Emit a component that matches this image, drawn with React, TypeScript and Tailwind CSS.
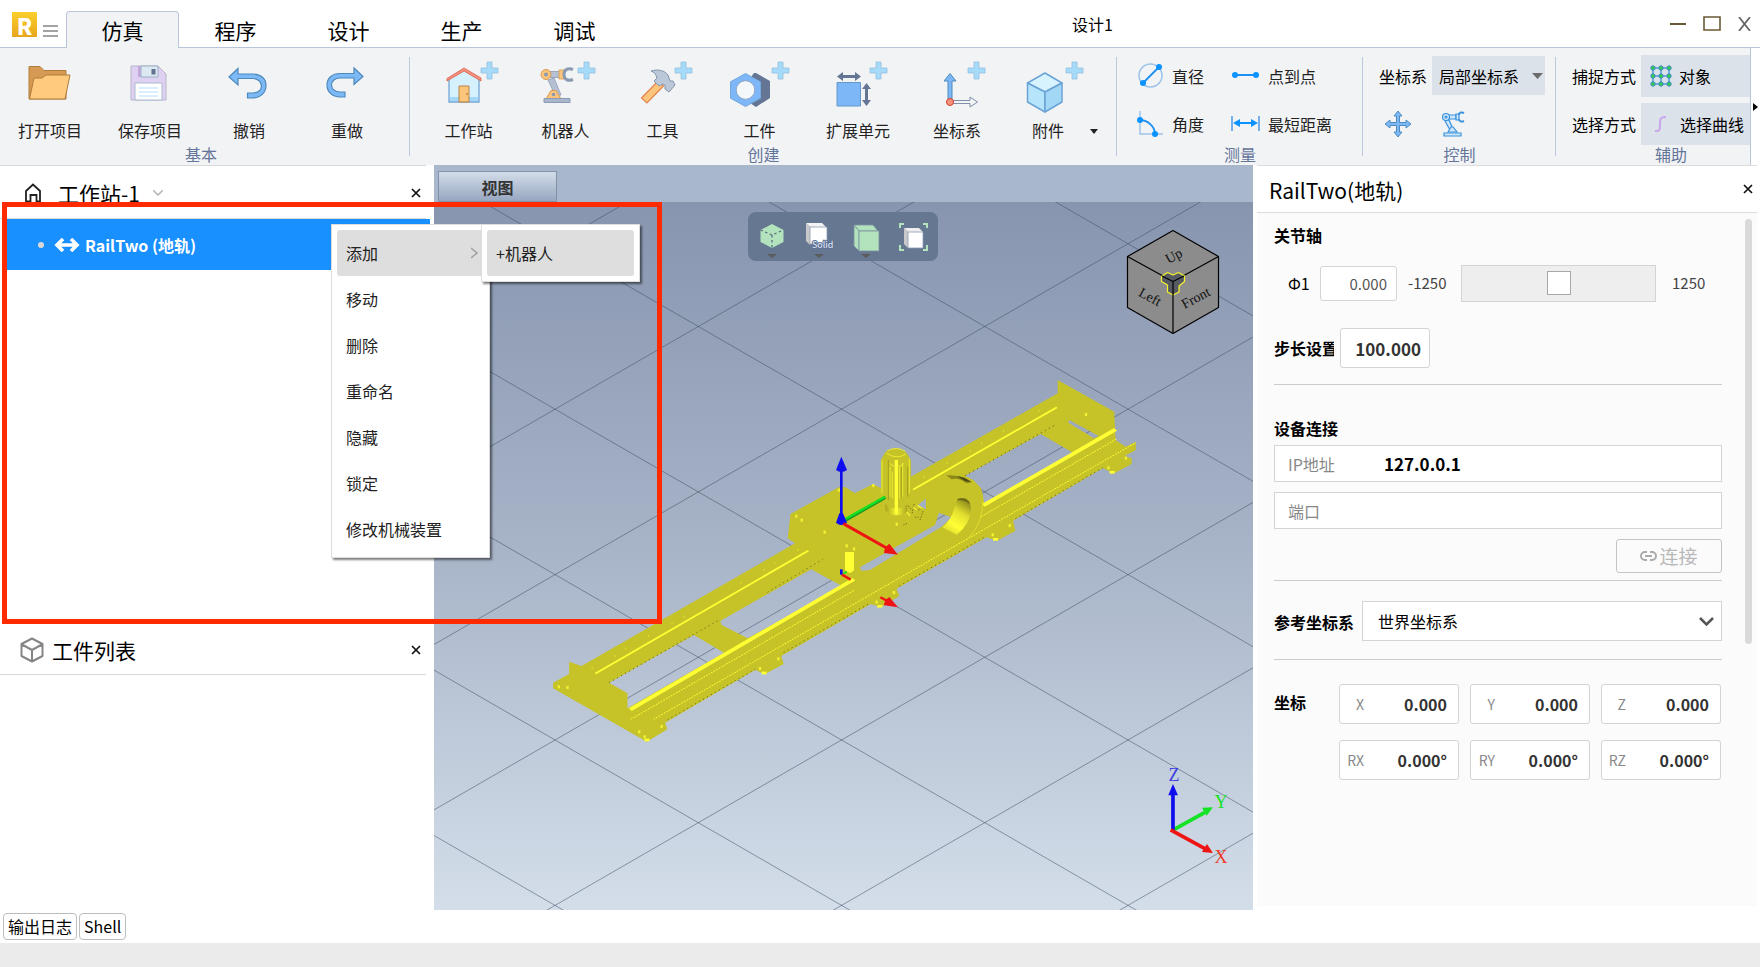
import * as React from "react";
import clsx from "clsx";

const tabs = ["仿真", "程序", "设计", "生产", "调试"];

const menuItems = ["添加", "移动", "删除", "重命名", "隐藏", "锁定", "修改机械装置"];

export default function App() {
  return (
    <div className="flex min-h-screen flex-col overflow-hidden bg-white font-['Noto_Sans_CJK_SC',sans-serif] text-[16px] leading-6 text-black">
      <TitleBar />
      <Ribbon />
      <main className="relative flex flex-1">
        <LeftPanel />
        <Viewport />
        <PropertyPanel />
        <div className="pointer-events-none absolute left-[2px] top-[37px] z-30 h-[422px] w-[660px] border-[5px] border-[#ff2a00]" />
      </main>
      <div className="flex h-[33px] gap-[2px] px-[3px] pt-[3px]">
        <button className="h-[27px] rounded-[4px] border border-[#bdbdbd] px-1 leading-[25px]">输出日志</button>
        <button className="h-[27px] rounded-[4px] border border-[#bdbdbd] px-1 leading-[25px]">Shell</button>
      </div>
      <footer className="h-6 bg-[#ebebeb]" />
    </div>
  );
}

function TitleBar() {
  return (
    <header className="flex h-[48px] items-end border-b border-[#b9c5d9]">
      <div className="flex w-[66px] gap-[6px] self-start pl-3 pt-3">
        <span className="flex h-[25px] w-[25px] items-center justify-center bg-linear-to-b from-[#fad02c] to-[#e8a51c] text-[22px] font-black leading-6 text-white">
          R
        </span>
        <button aria-label="菜单" className="pt-3">
          <svg width="15" height="14" viewBox="0 0 15 14" stroke="#858585" strokeWidth="1.5">
            <path d="M0 2h15M0 7h15M0 12h15" />
          </svg>
        </button>
      </div>
      <nav className="-mb-px flex">
        {tabs.map((tab, i) => (
          <button
            key={tab}
            className={clsx(
              "h-[37px] w-[113px] rounded-t-[4px] border border-b-0 pb-px text-[21px] leading-8",
              i === 0 ? "border-[#b9c5d9] bg-[#f1f3f5]" : "border-transparent",
            )}
          >
            {tab}
          </button>
        ))}
      </nav>
      <h1 className="flex-1 self-center pr-7 text-center text-[16px]">设计1</h1>
      <div className="flex w-[178px] items-center justify-end gap-[17px] self-start pr-[9px] pt-4 text-[#6b5836]">
        <button aria-label="最小化">
          <svg width="16" height="14" viewBox="0 0 16 14" stroke="currentColor" strokeWidth="2">
            <path d="M0 7h16" />
          </svg>
        </button>
        <button aria-label="最大化">
          <svg width="18" height="15" viewBox="0 0 18 15" fill="none" stroke="currentColor" strokeWidth="1.6">
            <path d="M1 1h16v13H1z" />
          </svg>
        </button>
        <button aria-label="关闭">
          <svg width="13" height="14" viewBox="0 0 13 14" stroke="#666" strokeWidth="1.8">
            <path d="M1 0l11 14M12 0L1 14" />
          </svg>
        </button>
      </div>
    </header>
  );
}

/* ---------- ribbon ---------- */

function Ribbon() {
  return (
    <div className="flex h-[117px] overflow-hidden bg-[#f2f3f5]">
      <Group title="基本" className="w-[410px] shrink-0" titleClass="mr-2">
        <Tool label="打开项目" className="w-[100px]"><FolderIcon /></Tool>
        <Tool label="保存项目" className="w-[100px]"><SaveIcon /></Tool>
        <Tool label="撤销" className="w-[98px]"><UndoIcon /></Tool>
        <Tool label="重做" className="w-[98px]"><RedoIcon /></Tool>
      </Group>
      <Group title="创建" className="w-[707px] shrink-0 pl-[10px]" titleClass="-ml-[10px]">
        <Tool label="工作站" className="w-[97px]"><HouseIcon /></Tool>
        <Tool label="机器人" className="w-[97px]"><RobotIcon /></Tool>
        <Tool label="工具" className="w-[97px]"><HammerIcon /></Tool>
        <Tool label="工件" className="w-[97px]"><NutIcon /></Tool>
        <Tool label="扩展单元" className="w-[100px]"><ExtendIcon /></Tool>
        <Tool label="坐标系" className="w-[98px]"><FrameIcon /></Tool>
        <Tool label="附件" className="w-[84px]"><BoxIcon /></Tool>
        <button aria-label="更多附件" className="flex items-start pt-[81px]">
          <svg width="8" height="5" viewBox="0 0 8 5"><path d="M0 0h8L4 5z" fill="#222" /></svg>
        </button>
      </Group>
      <Group title="测量" className="w-[246px] shrink-0">
        <div className="grid grid-cols-[94px_auto] content-start gap-y-[17px] pl-[20px] pt-3">
          <SmallTool label="直径">
            <svg width="27" height="27" viewBox="0 0 27 27" fill="none">
              <circle cx="13.500" cy="13.500" r="11.500" stroke="#9dc3ea" strokeWidth="1.5" />
              <path d="M6 21L21 6" stroke="#1c90f5" strokeWidth="1.8" />
              <circle cx="6" cy="21" r="3" fill="#0a93ff" />
              <circle cx="22" cy="5" r="3" fill="#0a93ff" />
            </svg>
          </SmallTool>
          <SmallTool label="点到点">
            <svg width="29" height="27" viewBox="0 0 29 27">
              <path d="M3 13h23" stroke="#1c90f5" strokeWidth="2" />
              <circle cx="4" cy="13" r="3" fill="#0a93ff" />
              <circle cx="25" cy="13" r="3" fill="#0a93ff" />
            </svg>
          </SmallTool>
          <SmallTool label="角度">
            <svg width="27" height="27" viewBox="0 0 27 27" fill="none">
              <path d="M3 1v23h23" stroke="#9dc3ea" strokeWidth="1.500" />
              <path d="M3 10c8 0 15 7 15 14" stroke="#1c90f5" strokeWidth="1.800" />
              <circle cx="3" cy="10" r="3" fill="#0a93ff" />
              <circle cx="18" cy="24" r="3" fill="#0a93ff" />
            </svg>
          </SmallTool>
          <SmallTool label="最短距离">
            <svg width="29" height="27" viewBox="0 0 29 27">
              <path d="M1 6v15M28 6v15" stroke="#69a9e8" strokeWidth="1.8" />
              <path d="M5 13h19" stroke="#0a93ff" strokeWidth="2" />
              <path d="M2 13l7-4v8zM27 13l-7-4v8z" fill="#0a93ff" />
            </svg>
          </SmallTool>
        </div>
      </Group>
      <Group title="控制" className="w-[193px] shrink-0">
        <div className="pl-[16px] pt-2">
          <div className="flex items-center gap-[5px]">
            <label htmlFor="frame">坐标系</label>
            <span className="relative flex">
              <select id="frame" className="h-[39px] w-[113px] appearance-none bg-[#dce2ea] pl-[7px] outline-none">
                <option>局部坐标系</option>
              </select>
              <svg className="pointer-events-none absolute right-[2px] top-[17px]" width="11" height="6" viewBox="0 0 11 6">
                <path d="M0 0h11L5.500 6z" fill="#6c6c6c" />
              </svg>
            </span>
          </div>
          <div className="flex gap-7 pl-[5px] pt-[15px]">
            <button aria-label="移动">
              <svg width="28" height="28" viewBox="0 0 28 28" fill="#7db8f5" stroke="#4e8cc0" strokeWidth="1">
                <path d="M14 1l4 5h-2.500v6.500H22V10l5 4-5 4v-2.500h-6.500V22H18l-4 5-4-5h2.500v-6.500H6V18l-5-4 5-4v2.500h6.500V6H10z" />
              </svg>
            </button>
            <button aria-label="机器人">
              <svg width="26" height="28" viewBox="0 0 26 28" fill="#cfe6fb" stroke="#3b93dd" strokeWidth="1.2">
                <path d="M7 5h9v4H7zM5 11l4-1 4 9-3 1z" />
                <circle cx="6" cy="7" r="3.500" />
                <circle cx="6" cy="7" r="1" />
                <path d="M16 4h3v6h-3z" />
                <path d="M19 5c0-3 3-3 5-2M19 9c0 3 3 3 5 2" fill="none" strokeWidth="2" />
                <path d="M8 22l3-5h2l4 5z" />
                <path d="M4 23h17v3H4z" />
              </svg>
            </button>
          </div>
        </div>
      </Group>
      <div className="flex flex-1 overflow-hidden border-r border-[#b9c5d9]">
        <Group title="辅助" last className="w-[230px] shrink-0">
          <div className="flex flex-col gap-[6px] pl-4 pt-[7px]">
            <div className="flex items-center gap-[5px]">
              <span id="snap">捕捉方式</span>
              <button aria-labelledby="snap" className="flex h-[42px] w-[140px] items-center gap-[7px] bg-[#dce2ea] pl-[9px]">
                <svg width="22" height="22" viewBox="0 0 22 22">
                  <path d="M3 3h16v16H3zM11 3v16M3 11h16" fill="none" stroke="#4c9be0" strokeWidth="1.500" />
                  {[3, 11, 19].map((y) =>
                    [3, 11, 19].map((x) => (
                      <circle key={`${x}-${y}`} cx={x} cy={y} r="2.2" fill="#2ecf4b" stroke="#4788c8" />
                    )),
                  )}
                </svg>
                对象
              </button>
            </div>
            <div className="flex items-center gap-[5px]">
              <span id="pick">选择方式</span>
              <button aria-labelledby="pick" className="flex h-[42px] w-[140px] items-center gap-2 bg-[#dce2ea] pl-[9px]">
                <svg width="22" height="22" viewBox="0 0 22 22" fill="none" stroke="#c9a5ea" strokeWidth="2">
                  <path d="M5 18h2c3 0 3-2 3-7s0-7 6-7" />
                </svg>
                选择曲线
              </button>
            </div>
          </div>
        </Group>
      </div>
      <div className="flex w-[9px] items-center justify-center bg-white">
        <svg width="5" height="8" viewBox="0 0 5 8"><path d="M0 0v8l5-4z" /></svg>
      </div>
    </div>
  );
}

function Group({
  title,
  last,
  className,
  titleClass,
  children,
}: {
  title: string;
  last?: boolean;
  className?: string;
  titleClass?: string;
  children: React.ReactNode;
}) {
  return (
    <section className={clsx("relative flex flex-col", className)}>
      <div className="flex h-[96px]">{children}</div>
      <h2 className={clsx("text-center leading-5 text-[#64759a]", titleClass)}>{title}</h2>
      {!last && <span className="absolute right-0 top-[9px] h-[99px] w-px bg-[#bccade]" />}
    </section>
  );
}

function Tool({ label, className, children }: { label: string; className: string; children: React.ReactNode }) {
  return (
    <button className={clsx("flex shrink-0 flex-col items-center pt-3 text-[#222]", className)}>
      <svg className="overflow-visible" width="60" height="48" viewBox="0 0 60 48">
        {children}
      </svg>
      <span className="mt-[10px]">{label}</span>
    </button>
  );
}

function SmallTool({ label, children }: { label: string; children: React.ReactNode }) {
  return (
    <button className="flex h-[31px] items-center gap-2 whitespace-nowrap text-[#222]">
      {children}
      {label}
    </button>
  );
}

function Plus({ x = 42 }: { x?: number }) {
  return (
    <path
      transform={`translate(${x} 2)`}
      d="M6 0h5v6h6v5h-6v6H6v-6H0V6h6z"
      fill="#a5daf8"
      stroke="#94bfdf"
      strokeWidth="0.800"
    />
  );
}

function FolderIcon() {
  return (
    <g stroke="#b07c3c" strokeWidth="1">
      <path d="M9 39V6.500h11l4 4h22V39z" fill="#d69a55" />
      <path d="M9.500 39L14 18h8l4-3h24l-5 24z" fill="#ffca7e" />
    </g>
  );
}

function SaveIcon() {
  return (
    <g>
      <path d="M11 6h27l8 8v26H11z" fill="#dfd1f2" stroke="#b7b4c8" />
      <path d="M18 6h3v11h-3z" fill="#c6a9dc" />
      <path d="M21 6h17v11H21z" fill="#dce8f2" stroke="#9fb0c6" />
      <path d="M31.500 9h4v5.500h-4z" fill="#657390" />
      <path d="M15 23h27v17H15z" fill="#fff" stroke="#aab9d0" />
      <path d="M19 28h19M19 32h19M19 36h19" stroke="#cdeafd" strokeWidth="1.500" />
    </g>
  );
}

function UndoIcon() {
  return (
    <path
      d="M10 17l9-8.500v5.500h15c8 0 13 5 13 11.500S42 38 34 38h-5.500v-5H34c5 0 8.500-3 8.500-7S39 18.500 34 18.500H19V25z"
      fill="#7cb9f6"
      stroke="#4d8abb"
      strokeWidth="1.200"
    />
  );
}

function RedoIcon() {
  return (
    <path
      d="M46 16.500l-9-8.500v5.500H23c-8 0-13 5-13 11.500S15 37 23 37h5v-5h-5c-5 0-8.500-3-8.500-7s3.500-7 8.500-7h14v6.500z"
      fill="#7cb9f6"
      stroke="#4d8abb"
      strokeWidth="1.200"
    />
  );
}

function HouseIcon() {
  return (
    <g>
      <path d="M10 19L25 10l15 9v23H10z" fill="#d5f1fe" stroke="#74a5d8" strokeWidth="1.300" />
      <path d="M11 37h28v4H11z" fill="#a3d7f6" />
      <path d="M20 26h10v16H20z" fill="#fdc57b" stroke="#b98344" />
      <circle cx="28" cy="34" r="1" fill="#b98344" />
      <path d="M8 18.500V21l17-10 17 10v-3L25 8z" fill="#f4937c" stroke="#d95d4c" strokeWidth="0.800" />
      <Plus />
    </g>
  );
}

function RobotIcon() {
  return (
    <g>
      <path d="M14 11.500h14v6H14zM12 20l6-2 7 17h-6z" fill="#b5c1d3" stroke="#8b9ab2" strokeWidth="0.800" />
      <path d="M23 10h5v9h-5z" fill="#fdc57b" stroke="#d59a4d" strokeWidth="0.800" />
      <path d="M28 14.500c0-5 4-7 9-5M28 14.500c0 5 4 7 9 5" fill="none" stroke="#8c9ab0" strokeWidth="3" />
      <circle cx="10" cy="14.500" r="5" fill="#fdc57b" stroke="#d59a4d" />
      <circle cx="10" cy="14.500" r="2" fill="#8b9ab2" />
      <path d="M10 39l5-8.500h5l5 8.500z" fill="#fdc57b" stroke="#d59a4d" />
      <circle cx="17.500" cy="34.500" r="1.800" fill="#8b9ab2" />
      <path d="M8 38.500h26v4H8z" fill="#a9b7cc" stroke="#8b9ab2" />
      <Plus x={42} />
    </g>
  );
}

function HammerIcon() {
  return (
    <g>
      <path d="M8.500 38L25 21l5.500 5L14 43z" fill="#fdc57b" stroke="#e2834f" strokeWidth="1.200" />
      <path
        d="M18 11c7-2 13-1 17 4l2 6h3l2 4-6 7-4-3v-4l-2-1-4 2-5-5 3-3c-1-4-3-6-6-7z"
        fill="#bac8da"
        stroke="#8496ac"
      />
      <Plus />
    </g>
  );
}

function NutIcon() {
  return (
    <g>
      <path d="M24 13h2l14 8v17l-14 9-6-4 10-8V23l-9-6z" fill="#657594" />
      <path d="M15.500 13.500l15 8.300v16.400l-15 8.300-15-8.300V21.800z" fill="#7db7f8" stroke="#74a9de" />
      <circle cx="15.500" cy="30" r="9.300" fill="#f5f8fa" stroke="#8ea8c6" />
      <Plus x={42} />
    </g>
  );
}

function ExtendIcon() {
  return (
    <g>
      <path d="M9 22.500h23.500V46H9z" fill="#7db7f8" stroke="#6498cb" />
      <path d="M14 16.500h14M38.500 28v14" stroke="#657594" strokeWidth="3" />
      <path d="M9 16.500l6-4.500v9zM33 16.500L27 12v9zM38.500 23l-4.500 6h9zM38.500 46L34 40h9z" fill="#657594" />
      <Plus x={42} />
    </g>
  );
}

function FrameIcon() {
  return (
    <g>
      <path d="M21 42V21h-4l6-7.500 6 7.500h-4v21z" fill="#7db7f8" stroke="#4d8abb" />
      <path d="M26 40.500h17V37l7.500 5-7.500 5v-3.500H26z" fill="#f2f3f5" stroke="#7f8fa8" />
      <circle cx="23" cy="42" r="3.500" fill="#f4937c" stroke="#d93f33" />
      <Plus x={41} />
    </g>
  );
}

function BoxIcon() {
  return (
    <g stroke="#6ba3d6" strokeWidth="1.500" strokeLinejoin="round">
      <path d="M9.500 23L27 13l17 10-17 9z" fill="#d7f3fe" />
      <path d="M9.500 23L27 32v20L9.500 42z" fill="#b5e4fb" />
      <path d="M44 23L27 32v20l17-10z" fill="#a2d8f6" />
      <Plus x={48} />
    </g>
  );
}

/* ---------- left panels ---------- */

function CloseButton({ label }: { label: string }) {
  return (
    <button aria-label={label} className="p-1">
      <svg width="10" height="10" viewBox="0 0 10 10" stroke="#111" strokeWidth="1.7">
        <path d="M1 1l8 8M9 1L1 9" />
      </svg>
    </button>
  );
}

function LeftPanel() {
  return (
    <aside className="flex w-[434px] shrink-0 flex-col">
      <section className="relative flex-[455]">
        <div className="mr-2 flex h-[54px] items-center border-b border-t border-[#d9d9d9] pl-6 pr-px pt-[2px]">
          <svg width="18" height="20" viewBox="0 0 18 20" fill="none" stroke="#222" strokeWidth="1.800">
            <path d="M2 18.500V8l7-6.500L16 8v10.500h-3.500V12h-6v6.500z" />
          </svg>
          <h2 className="pl-4 text-[21px] leading-8">工作站-1</h2>
          <button aria-label="切换工作站" className="ml-[13px] flex-1">
            <svg width="10" height="6" viewBox="0 0 10 6" fill="none" stroke="#b0b0b0" strokeWidth="1.400">
              <path d="M0 0l5 5 5-5" />
            </svg>
          </button>
          <CloseButton label="关闭工作站" />
        </div>
        <div className="ml-[6px] mr-1 flex h-[51px] items-center bg-[#1890ff] pl-8 font-bold text-white">
          <span className="h-[6px] w-[6px] rounded-full bg-[#d9d9d9]" />
          <svg className="ml-[10px] mr-[5px]" width="26" height="14" viewBox="0 0 26 14" fill="none" stroke="#fff" strokeWidth="3.600">
            <path d="M3 7h20M9 1L3 7l6 6M17 1l6 6-6 6" />
          </svg>
          RailTwo (地轨)
        </div>
        <ContextMenu />
      </section>
      <section className="flex-[290]">
        <div className="mr-2 flex h-[55px] items-center border-b border-[#d9d9d9] pl-5 pr-px pt-[6px]">
          <svg width="24" height="26" viewBox="0 0 24 26" fill="none" stroke="#858585" strokeWidth="2" strokeLinejoin="round">
            <path d="M12 1.500L22.500 7v12L12 24.500 1.500 19V7zM2 7.500l10 5.500 10-5.500M12 13v11" />
          </svg>
          <h2 className="flex-1 pl-2 text-[21px] leading-8">工件列表</h2>
          <CloseButton label="关闭工件列表" />
        </div>
      </section>
    </aside>
  );
}

function ContextMenu() {
  return (
    <div className="absolute left-[331px] top-[59px] z-20 flex items-start text-[#222]">
      <ul className="w-[159px] border border-[#ddd] bg-white p-[5px] shadow-[2px_2px_2px_rgba(0,0,0,0.5)]">
        {menuItems.map((item, i) => (
          <li key={item}>
            <button
              className={clsx(
                "flex h-[46px] w-full items-center justify-between rounded-[3px] pl-[9px] pr-[6px] text-left",
                i === 0 && "bg-[#dedede]",
              )}
            >
              {item}
              {i === 0 && (
                <svg width="7" height="12" viewBox="0 0 7 12" fill="none" stroke="#a0a0a0" strokeWidth="1.500">
                  <path d="M0 1l6 5-6 5" />
                </svg>
              )}
            </button>
          </li>
        ))}
      </ul>
      <ul className="-ml-[9px] w-[159px] border border-[#ddd] bg-white p-[5px] shadow-[2px_2px_2px_rgba(0,0,0,0.5)]">
        <li>
          <button className="h-[46px] w-full rounded-[3px] bg-[#dedede] pl-[9px] text-left">+机器人</button>
        </li>
      </ul>
    </div>
  );
}

/* ---------- 3D view ---------- */

function Viewport() {
  return (
    <section className="flex min-w-0 flex-1 flex-col">
      <div className="flex h-[37px] items-end bg-[#a9b7cc] pl-[4px]">
        <button className="h-[31px] w-[119px] border border-[#8292ac] bg-linear-to-b from-[#d3dde9] to-[#97a7c0] font-bold leading-7 text-[#333]">
          视图
        </button>
      </div>
      <div className="relative flex-1 overflow-hidden bg-linear-to-b from-[#8795af] via-[#a8b4c8] to-[#d4deea]">
        <Scene />
        <div className="absolute left-[314px] top-[10px] flex h-[49px] w-[190px] gap-[17px] rounded-[8px] bg-[#667791] px-[10px] pt-[6px]">
          <button aria-label="线框">
            <svg width="30" height="36" viewBox="0 0 30 36">
              <path d="M14 2l11.500 6v12L14 26 2.500 20V8z" fill="#b2e3bd" />
              <path d="M2.500 8L14 13l11.500-5M14 13v13" fill="none" stroke="#5b6a80" strokeWidth="1.300" strokeDasharray="2.500 2.500" />
              <path d="M9 32h10l-5 4z" fill="#5c5c5c" />
            </svg>
          </button>
          <button aria-label="实体">
            <svg className="overflow-visible" width="30" height="36" viewBox="0 0 30 36">
              <path d="M1 1h16l4 4H5z" fill="#f3f3f3" />
              <path d="M1 1l4 4v18l-4-4z" fill="#c9c9c9" />
              <path d="M5 5h17v17H5z" fill="#fff" stroke="#8a99b3" strokeWidth="0.800" />
              <text x="7" y="26" fontSize="9" fill="#e4ebf5" stroke="#5d7196" strokeWidth="2" paintOrder="stroke">
                Solid
              </text>
              <path d="M9 32h10l-5 4z" fill="#5c5c5c" />
            </svg>
          </button>
          <button aria-label="面">
            <svg width="30" height="36" viewBox="0 0 30 36" stroke="#7b90a0" strokeWidth="0.800">
              <path d="M2 3h19l5 6H7z" fill="#b2e3bd" />
              <path d="M2 3l5 6v20l-5-5z" fill="#b2e3bd" />
              <path d="M7 9h20v20H7z" fill="#b2e3bd" />
              <path d="M9 32h10l-5 4z" fill="#5c5c5c" stroke="none" />
            </svg>
          </button>
          <button aria-label="适应窗口">
            <svg width="30" height="36" viewBox="0 0 30 36">
              <path d="M1 6V2h4M24 2h4v4M28 23v5h-4M5 28H1v-5" fill="none" stroke="#b2e3bd" strokeWidth="2" />
              <path d="M5 6h15l4 4H9z" fill="#eee" />
              <path d="M5 6l4 4v16l-4-4z" fill="#c9c9c9" />
              <path d="M9 10h15v16H9z" fill="#fff" stroke="#8a99b3" strokeWidth="0.800" />
            </svg>
          </button>
        </div>
      </div>
    </section>
  );
}

// floor lines run at ±30°, repeating every 165.4 units down the screen
const floor = Array.from({ length: 11 }, (_, i) => -496 + i * 165.4);

const RAIL =
  "M268 968L303 942V905L330 918L795 550L779 535L785 462L890 382H905L925 400L965 372L982 385V300L992 275L1015 264L1038 278L1047 300V350L1367 100V60L1490 155L1493 240L1515 260L1537 245V270L1513 288L1528 295V312L1490 340L1465 325L1270 482L1275 512L1235 542L1212 532L1016 686L1022 708L982 742L960 732L765 888L770 912L730 942L708 930L512 1088L517 1108L472 1145L268 985Z" +
  "M390 968L575 825L640 878L430 1045V1000Z" +
  "M632 783L830 628L897 678L692 835L635 795Z" +
  "M1165 347L1330 222L1400 278L1207 430L1200 385L1183 360Z" +
  "M1392 180L1456 228L1446 235L1390 188Z" +
  "M936 622L1100 495L1108 458L1136 472L1114 500L958 630L940 632Z" +
  "M1062 435L1080 416V448Z";

const bolts = [
  [280, 980], [299, 982], [455, 1115], [467, 1130], [504, 1099], [718, 925], [758, 896], [972, 726], [1010, 697],
  [1225, 524], [1262, 496], [1477, 323], [1515, 294], [797, 468], [809, 480], [859, 516], [907, 557], [923, 566],
  [890, 390], [965, 376], [1428, 163], [1016, 492],
];

const pins = [
  [352, 925], [402, 888], [425, 866], [475, 828], [526, 790], [552, 770], [676, 668], [726, 630], [750, 610],
  [800, 570], [1075, 350], [1125, 308], [1175, 272], [1200, 250], [1248, 212], [1325, 152],
];

function Scene() {
  return (
    <svg
      className="absolute inset-0 h-full w-full"
      viewBox="434 202 819 708"
      preserveAspectRatio="xMidYMid slice"
      role="img"
      aria-label="RailTwo 三维视图"
    >
      <defs>
        <linearGradient id="bore" x1="0.200" y1="1" x2="0.700" y2="0">
          <stop offset="0" stopColor="#d8d530" />
          <stop offset="0.300" stopColor="#ffff33" />
          <stop offset="0.650" stopColor="#e2df30" />
          <stop offset="1" stopColor="#8d8a1a" />
        </linearGradient>
        <linearGradient id="barrel">
          <stop offset="0" stopColor="#aaa722" />
          <stop offset="0.500" stopColor="#f4f334" />
          <stop offset="1" stopColor="#aaa722" />
        </linearGradient>
      </defs>

      <g stroke="#3c4a5e" strokeOpacity="0.500" strokeWidth="1">
        {floor.map((d) => (
          <React.Fragment key={d}>
            <path d={`M434 ${339.1 + d}L1253 ${811.9 + d}`} />
            <path d={`M434 ${478.9 + d}L1253 ${6 + d}`} />
          </React.Fragment>
        ))}
      </g>

      <g transform="translate(430 360) scale(0.4592 0.3333)">
        <path d={RAIL} fill="#c6c328" fillRule="evenodd" />
        <g fill="none" stroke="#ffff33">
          <path d="M360 941L824 572M1052 389L1365 142" strokeWidth="5" />
          <path d="M436 1049L923 658M1205 436L1493 208" strokeWidth="10" />
          <path d="M437 1078L925 690M487 1078L1175 533L1537 248M1200 470L1495 237" strokeWidth="2.500" strokeDasharray="4 3" />
        </g>
        <path
          d="M517 1080L708 928M770 878L960 728M1022 678L1212 528M1275 476L1465 323M390 968L632 778M735 697L855 598M1165 347L1365 192"
          stroke="#55521a"
          strokeWidth="2"
          strokeDasharray="3 8"
        />
        {pins.map(([x, y]) => (
          <path key={`${x}-${y}`} d={`M${x} ${y - 3}h2v6h-2z`} fill="#e6e431" />
        ))}
        {bolts.map(([x, y]) => (
          <path key={`${x}-${y}`} d={`M${x - 2} ${y - 4}h5v9h-5z`} fill="#f2f133" />
        ))}
        {[[472, 1141], [727, 940], [979, 740], [1231, 539], [1485, 338]].map(([x, y]) => (
          <path key={x} d={`M${x - 5} ${y - 5}h11v8h-11z`} fill="#ffff33" />
        ))}
      </g>

      {/* carriage, motor and the cable ring */}
      <g transform="translate(780 430) scale(0.3333)">
        <path d="M485 150Q520 125 560 148Q612 165 610 215Q608 270 570 322L487 292Q510 278 515 262L478 243V180z" fill="#c6c328" />
        <path d="M498 136Q540 132 576 157L560 160Q535 142 515 148z" fill="#8d8a1a" />
        <path d="M530 138Q555 140 574 156L556 154z" fill="#4d4b14" />
        <path d="M532 207Q572 195 573 238Q570 285 530 314L487 292Q515 270 524 230z" fill="url(#bore)" />
        <path d="M532 207Q560 198 571 222Q550 208 534 211z" fill="#6f6c18" />
        <path d="M608 212Q610 275 568 322" fill="none" stroke="#ecea33" strokeWidth="2" />
        <path d="M304 95L318 66L350 55L380 70L392 95V205L378 250L350 262L316 235L304 205z" fill="#c6c328" />
        <path d="M316 222Q348 250 382 222V246Q350 268 316 242z" fill="url(#barrel)" />
        <path d="M344 90h10v160h-10z" fill="#ffff33" />
        <path
          d="M306 92V190M330 110V200M337 125V205M359 110V205M368 100V200M388 85V190M320 70Q350 90 378 72M328 100Q350 120 372 100M322 62Q350 48 376 64"
          fill="none"
          stroke="#ebe933"
          strokeWidth="3"
        />
        <path d="M325 90V210M364 112V202M383 110V200" stroke="#8f8c1b" strokeWidth="2" />
        <path d="M385 228l12 14M402 222l-6 30M415 240l14-6M405 262h10M420 270l10-28M370 285l14-6" stroke="#706d18" strokeWidth="3" strokeDasharray="4 4" />
        <path d="M400 232l10 8M412 226l16 10M380 246l10 12" stroke="#f3f133" strokeWidth="4" />
        <path d="M195 366h27v55l-12 9-15-10z" fill="#ffff33" />

        <path d="M197 270L316 202" stroke="#169a22" strokeWidth="10" />
        <path d="M196 267L315 200" stroke="#14e324" strokeWidth="7" />
        <path d="M184 270V120" stroke="#0d0df0" strokeWidth="8" />
        <path d="M184 80L201 120Q184 132 168 120z" fill="#0d0df0" />
        <path d="M178 250h11L201 278Q184 292 168 278z" fill="#0d0df0" />
        <path d="M190 281L325 357" stroke="#ee1414" strokeWidth="9" />
        <path d="M354 374L328 341Q312 352 312 369z" fill="#ee1414" />
        <path d="M184 418v16" stroke="#0d0df0" strokeWidth="8" />
        <path d="M190 430l10-4" stroke="#14e324" strokeWidth="6" />
        <path d="M186 434L212 449" stroke="#ee1414" strokeWidth="8" />
        <path d="M301 502L320 512" stroke="#ee1414" strokeWidth="7" />
        <path d="M354 532L328 501Q312 511 312 526z" fill="#ee1414" />

        <path d="M1180 1200L1275 1147" stroke="#14e324" strokeWidth="11" />
        <path d="M1299 1132L1266 1133L1280 1157z" fill="#14e324" />
        <path d="M1179 1206V1095" stroke="#0d0df0" strokeWidth="11" />
        <path d="M1179 1062L1194 1096H1165z" fill="#0d0df0" />
        <path d="M1172 1200L1275 1256" stroke="#ee1414" strokeWidth="11" />
        <path d="M1299 1269L1281 1242L1266 1266z" fill="#ee1414" />
      </g>
      <g className="font-['Liberation_Serif',serif]" fontSize="18" textAnchor="middle">
        <text x="1174" y="781" fill="#3a3de0">Z</text>
        <text x="1221" y="808" fill="#14e324">Y</text>
        <text x="1221" y="863" fill="#ee3a28">X</text>
      </g>

      {/* orientation cube */}
      <g stroke="#000" strokeWidth="1.200" strokeLinejoin="round">
        <path d="M1173 230.500L1218.500 256.500V307.500L1173 333.500L1127.500 307.500V256.500z" fill="#8c8c8c" />
        <path d="M1127.500 256.500L1173 281.500L1218.500 256.500" fill="none" />
        <path
          d="M1161.500 276.500L1167.500 272.500L1173 275L1178.500 272.500L1184.500 276V281.500L1179 286V292L1173 295L1167.500 292V285L1161.500 281.500z"
          fill="#565b63"
          stroke="#f5f52c"
        />
        <path d="M1162 276L1173 281.500L1184 276M1173 281.500V333" fill="none" />
      </g>
      <g className="font-['Liberation_Serif',serif]" fontSize="14" fill="#111" textAnchor="middle">
        <text transform="translate(1176 260) rotate(-28)">Up</text>
        <text transform="translate(1148 301) rotate(28)">Left</text>
        <text transform="translate(1198 302) rotate(-28)">Front</text>
      </g>
    </svg>
  );
}

/* ---------- property panel ---------- */

const boxCls = "rounded-[3px] border border-[#d4d4d4] bg-white outline-none";

function PropertyPanel() {
  return (
    <aside className="ml-[4px] mr-[3px] flex w-[500px] shrink-0 flex-col">
      <div className="flex h-[48px] items-center justify-between border-b border-t border-[#dcdcdc] pl-3">
        <h2 className="pt-[2px] text-[21px] leading-8">RailTwo(地轨)</h2>
        <CloseButton label="关闭属性" />
      </div>
      <div className="flex flex-1 justify-between bg-[#fbfbfb] pl-[17px] pr-[5px]">
        <div className="w-[448px]">
          <h3 className="pt-[10px] font-bold">关节轴</h3>
          <div className="mt-[17px] flex h-[38px] items-center pl-[14px] text-[15px] text-[#444]">
            <label htmlFor="phi" className="w-8 text-[16px] text-black">Φ1</label>
            <input id="phi" defaultValue="0.000" className={clsx(boxCls, "h-[35px] w-[77px] pr-[9px] text-right text-[#555]")} />
            <span className="w-[64px] pl-[11px]">-1250</span>
            <input
              type="range"
              min={-1250}
              max={1250}
              defaultValue={0}
              aria-label="Φ1"
              className="h-[37px] w-[195px] appearance-none border border-[#d4d4d4] bg-[#eee] [&::-webkit-slider-thumb]:h-6 [&::-webkit-slider-thumb]:w-6 [&::-webkit-slider-thumb]:appearance-none [&::-webkit-slider-thumb]:border [&::-webkit-slider-thumb]:border-[#a8a8a8] [&::-webkit-slider-thumb]:bg-white"
            />
            <span className="pl-4">1250</span>
          </div>
          <div className="flex h-[83px] items-center gap-[6px] border-b border-[#ccc] pt-[10px]">
            <label htmlFor="step" className="w-[60px] overflow-hidden whitespace-nowrap font-bold">步长设置</label>
            <input id="step" defaultValue="100.000" className={clsx(boxCls, "h-[40px] w-[90px] pr-[8px] text-right text-[17px] font-bold text-[#333]")} />
          </div>

          <h3 className="pb-[5px] pt-[31px] font-bold">设备连接</h3>
          <div className="flex flex-col gap-[10px]">
            <div className="flex h-[37px] items-center border border-[#d4d4d4] bg-white pl-[13px]">
              <label htmlFor="ip" className="w-24 shrink-0 text-[#888]">IP地址</label>
              <input id="ip" defaultValue="127.0.0.1" className="flex-1 text-[17px] font-bold outline-none" />
            </div>
            <div className="flex h-[37px] items-center border border-[#d4d4d4] bg-white pl-[13px]">
              <label htmlFor="port" className="w-24 shrink-0 text-[#888]">端口</label>
              <input id="port" className="flex-1 outline-none" />
            </div>
          </div>
          <div className="flex justify-end border-b border-[#ccc] pb-[7px] pt-[10px]">
            <button disabled className="flex h-[34px] w-[106px] items-center justify-center gap-[2px] rounded-[3px] border border-[#c4c4c4] text-[19px] text-[#b8b8b8]">
              <svg width="17" height="10" viewBox="0 0 17 10" fill="none" stroke="#aaa" strokeWidth="2">
                <path d="M7 1H5a4 4 0 000 8h2M10 1h2a4 4 0 010 8h-2M5 5h7" />
              </svg>
              连接
            </button>
          </div>

          <div className="flex h-[79px] items-center justify-between border-b border-[#ccc] pt-[2px]">
            <label htmlFor="ref" className="pt-[2px] font-bold">参考坐标系</label>
            <span className="relative flex">
              <select id="ref" className="h-[40px] w-[360px] appearance-none border border-[#d4d4d4] bg-white pl-[15px] outline-none">
                <option>世界坐标系</option>
              </select>
              <svg className="pointer-events-none absolute right-2 top-4" width="15" height="9" viewBox="0 0 15 9" fill="none" stroke="#555" strokeWidth="2.500">
                <path d="M1 1l6.500 6.500L14 1" />
              </svg>
            </span>
          </div>

          <div className="flex justify-between pr-px pt-6">
            <h3 className="pt-[6px] font-bold">坐标</h3>
            <div className="grid grid-cols-3 gap-x-[11px] gap-y-4">
              {[
                ["X", "0.000"],
                ["Y", "0.000"],
                ["Z", "0.000"],
                ["RX", "0.000°"],
                ["RY", "0.000°"],
                ["RZ", "0.000°"],
              ].map(([axis, value]) => (
                <label key={axis} className={clsx(boxCls, "flex h-10 w-[120px] items-center pr-[11px]")}>
                  <span className="w-6 text-right text-[14px] text-[#888]">{axis}</span>
                  <input defaultValue={value} className="w-0 flex-1 text-right font-bold text-[#333] outline-none" />
                </label>
              ))}
            </div>
          </div>
        </div>
        <div className="mt-[6px] h-[425px] w-[7px] rounded-full bg-[#dadada]" />
      </div>
      <div className="h-1" />
    </aside>
  );
}
